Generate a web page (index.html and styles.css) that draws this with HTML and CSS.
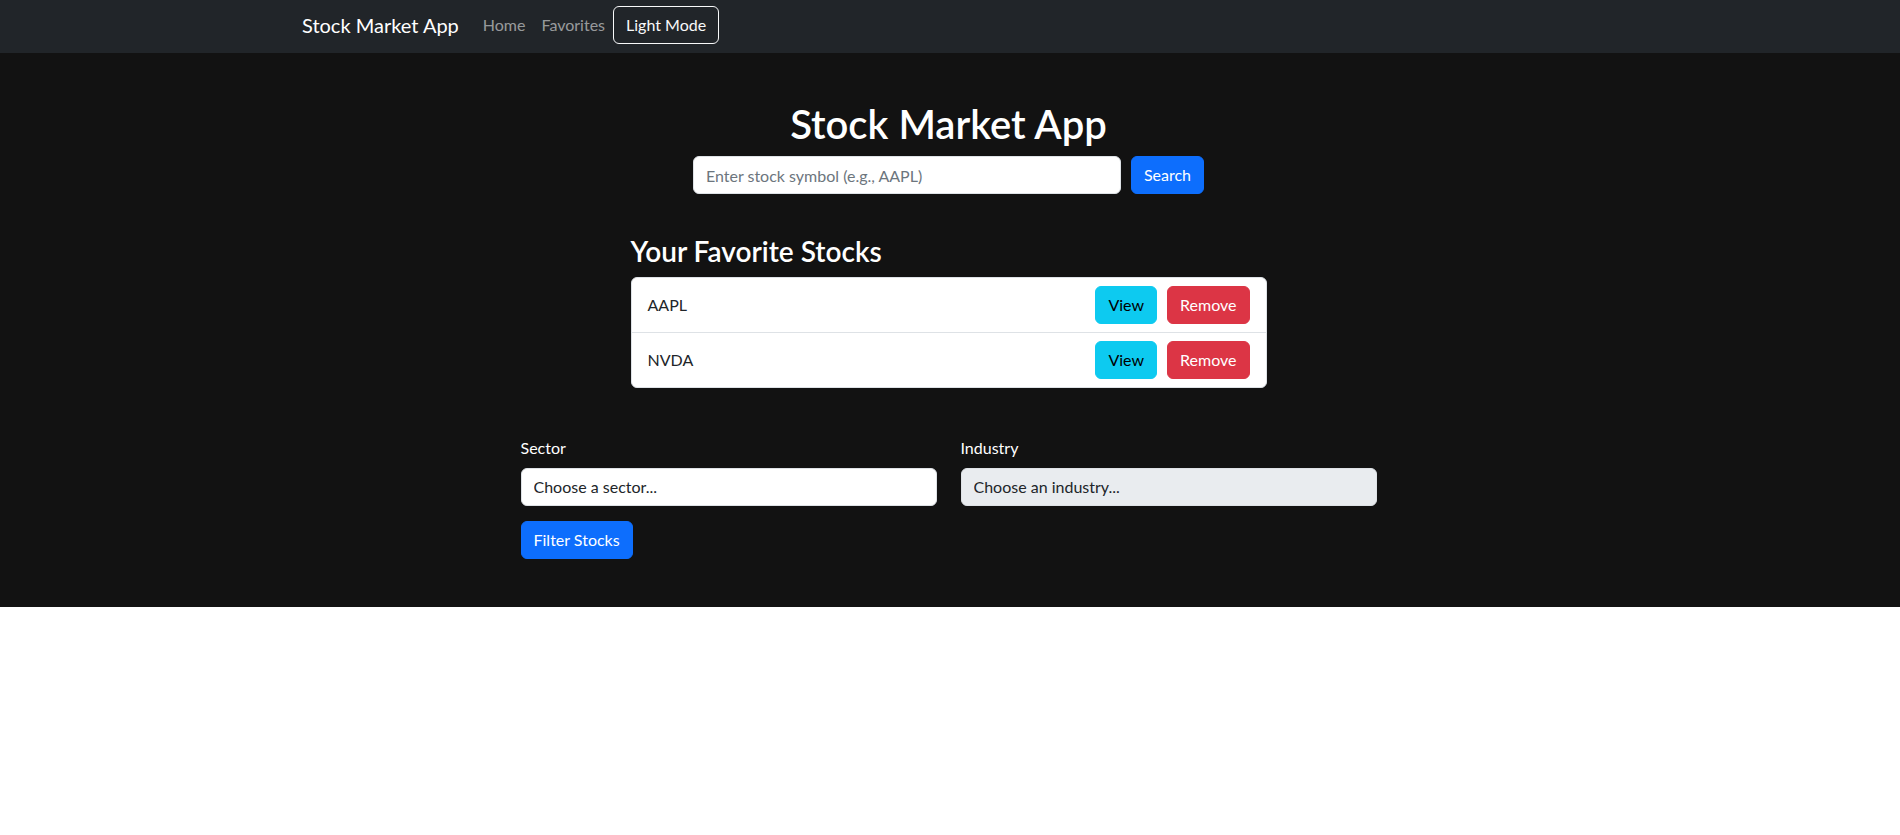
FILE: index.html
```html
<!DOCTYPE html>
<html lang="en">
<head>
<meta charset="utf-8">
<title>Stock Market App</title>
<link rel="stylesheet" href="styles.css">
</head>
<body>
<div class="app">
  <nav class="navbar">
    <div class="nav-container">
      <a class="brand" href="#">Stock Market App</a>
      <a class="nav-link" href="#">Home</a>
      <a class="nav-link" href="#">Favorites</a>
      <button class="btn btn-outline-light" type="button">Light Mode</button>
    </div>
  </nav>

  <main class="main">
    <h1 class="title">Stock Market App</h1>
    <form class="search-form">
      <input class="form-control search-input" type="text" placeholder="Enter stock symbol (e.g., AAPL)">
      <button class="btn btn-primary" type="button">Search</button>
    </form>

    <section class="favorites">
      <h3 class="fav-title">Your Favorite Stocks</h3>
      <ul class="list-group">
        <li class="list-item">
          <span>AAPL</span>
          <div class="actions">
            <button class="btn btn-info" type="button">View</button>
            <button class="btn btn-danger" type="button">Remove</button>
          </div>
        </li>
        <li class="list-item">
          <span>NVDA</span>
          <div class="actions">
            <button class="btn btn-info" type="button">View</button>
            <button class="btn btn-danger" type="button">Remove</button>
          </div>
        </li>
      </ul>
    </section>

    <section class="filters">
      <div class="filter-row">
        <div class="field">
          <label class="form-label" for="sector">Sector</label>
          <select class="form-select" id="sector">
            <option>Choose a sector...</option>
          </select>
        </div>
        <div class="field">
          <label class="form-label" for="industry">Industry</label>
          <select class="form-select" id="industry" disabled>
            <option>Choose an industry...</option>
          </select>
        </div>
      </div>
      <button class="btn btn-primary filter-btn" type="button">Filter Stocks</button>
    </section>
  </main>
</div>
</body>
</html>
```

FILE: styles.css
```css
* {
  box-sizing: border-box;
}

html, body {
  margin: 0;
  padding: 0;
}

body {
  background: #ffffff;
  font-family: Lato, "Liberation Sans", sans-serif;
  font-size: 16px;
  line-height: 1.5;
  color: #212529;
}

.app {
  background: #121212;
}

/* Navbar */
.navbar {
  background: #212529;
  height: 53px;
  padding: 5px 0 8px;
}

.nav-container {
  width: 1320px;
  margin: 0 auto;
  padding: 0 12px;
  display: flex;
  align-items: center;
  height: 40px;
}

.brand {
  color: #ffffff;
  text-decoration: none;
  font-size: 20px;
  line-height: 30px;
  padding: 5px 0;
  margin-right: 16px;
}

.nav-link {
  color: rgba(255, 255, 255, 0.55);
  text-decoration: none;
  padding: 8px;
  line-height: 24px;
}

/* Buttons */
.btn {
  font-family: inherit;
  font-size: 16px;
  line-height: 24px;
  padding: 6px 12px;
  border-radius: 6px;
  border: 1px solid transparent;
  cursor: pointer;
  height: 38px;
}

.btn-outline-light {
  background: transparent;
  color: #f8f9fa;
  border-color: #f8f9fa;
}

.btn-primary {
  background: #0d6efd;
  border-color: #0d6efd;
  color: #ffffff;
}

.btn-info {
  background: #0dcaf0;
  border-color: #0dcaf0;
  color: #000000;
}

.btn-danger {
  background: #dc3545;
  border-color: #dc3545;
  color: #ffffff;
}

/* Main */
.main {
  width: 1320px;
  margin: 0 auto;
  padding: 47px 13.5px 48px 10.5px;
  display: flex;
  flex-direction: column;
  align-items: center;
}

.title {
  margin: 0 0 8px;
  font-size: 40px;
  line-height: 48px;
  font-weight: 600;
  color: #ffffff;
  text-align: center;
}

.search-form {
  display: flex;
  gap: 10px;
  margin: 0;
}

.form-control,
.form-select {
  font-family: inherit;
  font-size: 16px;
  line-height: 24px;
  padding: 6px 12px;
  height: 38px;
  border: 1px solid #dee2e6;
  border-radius: 6px;
  background: #ffffff;
  color: #212529;
}

.search-input {
  width: 428px;
}

.search-input::placeholder {
  color: #6c757d;
}

/* Favorites */
.favorites {
  width: 636px;
  margin-top: 41px;
}

.fav-title {
  margin: 0 0 8px;
  font-size: 28px;
  line-height: 33.6px;
  font-weight: 600;
  color: #ffffff;
}

.list-group {
  list-style: none;
  margin: 0;
  padding: 0;
  background: #ffffff;
  border: 1px solid #dee2e6;
  border-radius: 6px;
}

.list-item {
  display: flex;
  align-items: center;
  justify-content: space-between;
  padding: 8px 16px;
  color: #212529;
}

.list-item + .list-item {
  border-top: 1px solid #dee2e6;
}

.actions {
  display: flex;
  gap: 10px;
}

/* Filters */
.filters {
  width: 856px;
  margin-top: 48px;
}

.filter-row {
  display: flex;
  gap: 24px;
}

.field {
  flex: 1;
  display: flex;
  flex-direction: column;
}

.form-label {
  color: #ffffff;
  line-height: 24px;
  margin-bottom: 8px;
}

.form-select {
  width: 100%;
  appearance: none;
  -webkit-appearance: none;
}

.form-select:disabled {
  background: #e9ecef;
  color: #212529;
  opacity: 1;
}

.filter-btn {
  margin-top: 15px;
}
```
